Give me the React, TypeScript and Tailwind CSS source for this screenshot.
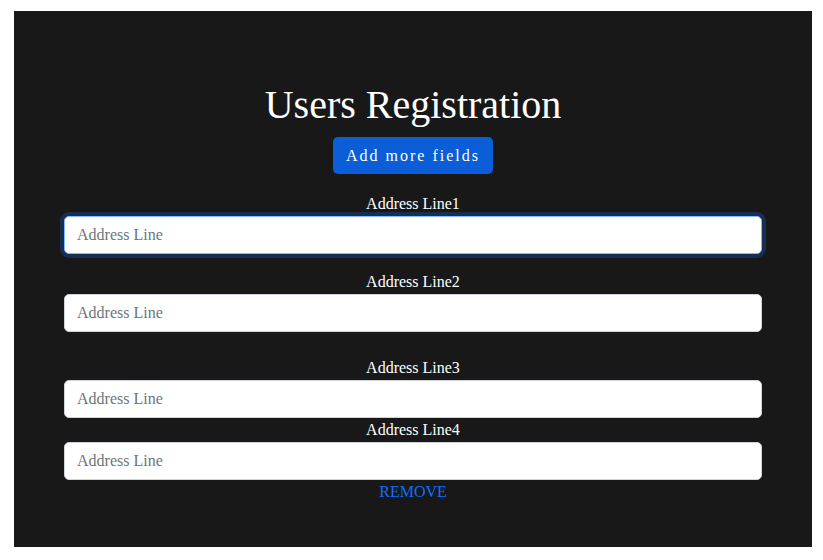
import { useState } from 'react';

const serif = { fontFamily: '"Liberation Serif", "Times New Roman", serif' };

interface FieldProps {
  label: string;
  focused?: boolean;
  className?: string;
}

function AddressField({ label, focused, className = '' }: FieldProps) {
  return (
    <div className={`flex flex-col ${className}`}>
      <label className="text-center text-base leading-6 text-white">{label}</label>
      <input
        type="text"
        placeholder="Address Line"
        autoFocus={focused}
        className={`h-[38px] w-full rounded-[5px] border bg-white px-3 text-base text-[#212529] outline-none placeholder:text-[#6c757d] ${
          focused
            ? 'border-[#86b7fe] shadow-[0_0_0_4px_rgba(13,110,253,0.25)]'
            : 'border-[#ced4da]'
        }`}
        style={serif}
      />
    </div>
  );
}

export default function App() {
  const [fields] = useState(['Address Line1', 'Address Line2', 'Address Line3', 'Address Line4']);
  const gaps = ['', 'mt-4', 'mt-6', 'mt-0'];

  return (
    <div className="min-h-screen bg-white pl-[14px] pt-[11px]" style={serif}>
      <div className="flex h-[536px] w-[798px] flex-col bg-[#181818] pt-[70px]">
        <h1 className="text-center text-[40px] leading-[48px] text-white">Users Registration</h1>
        <div className="mt-2 flex justify-center">
          <button className="h-[37px] w-[160px] rounded-[5px] bg-[#0b5ed7] text-base tracking-[2px] text-white">
            Add more fields
          </button>
        </div>
        <form className="mt-[18px] flex flex-col px-[50px]">
          {fields.map((f, i) => (
            <AddressField key={f} label={f} focused={i === 0} className={gaps[i]} />
          ))}
          <button type="button" className="mx-auto text-base leading-6 text-[#0d6efd]">
            REMOVE
          </button>
        </form>
      </div>
    </div>
  );
}
